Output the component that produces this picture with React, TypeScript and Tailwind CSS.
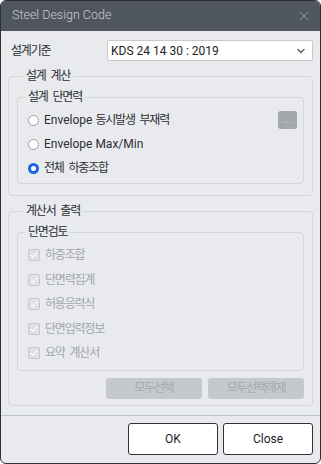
import { ChevronDown, X } from "lucide-react";

const font = { fontFamily: '"Roboto", "Noto Sans CJK KR", sans-serif' };

// Korean glyphs in the reference are set tighter than Noto CJK's full-width advance
function K({ children }: { children: string }) {
  return <span className="tracking-[-1.2px] [word-spacing:3px]">{children}</span>;
}

function Radio({ checked, label, ko }: { checked?: boolean; label?: string; ko?: string }) {
  return (
    <div className="flex h-[24px] items-center">
      <span
        className={`ml-[10px] mr-[5px] h-[11px] w-[11px] shrink-0 rounded-full bg-white ${
          checked ? "border-[3px] border-[#1a66e0]" : "border border-[#9aa0a6]"
        }`}
      />
      <span className="text-[12px] text-[#2b2e33]">
        {label}
        {ko && <K>{ko}</K>}
      </span>
    </div>
  );
}

function Check({ label }: { label: string }) {
  return (
    <div className="flex h-[24.5px] items-center">
      <span className="ml-[10px] mr-[5px] flex h-[12px] w-[12px] shrink-0 items-center justify-center rounded-[2px] border border-[#c4c8cd] bg-[#dfe1e5]">
        <svg width="8" height="8" viewBox="0 0 8 8" fill="none">
          <path d="M1 4.2 L3.1 6.2 L7 1.8" stroke="#f4f5f7" strokeWidth="1.4" strokeLinecap="round" strokeLinejoin="round" />
        </svg>
      </span>
      <span className="text-[12px] text-[#a3a7ad]">
        <K>{label}</K>
      </span>
    </div>
  );
}

function Legend({ children, inner }: { children: string; inner?: boolean }) {
  return (
    <legend className={`${inner ? "ml-[7px]" : "ml-[6px]"} px-[3px] text-[12px] leading-[18px] text-[#2b2e33]`}>
      <K>{children}</K>
    </legend>
  );
}

export default function App() {
  return (
    <div style={font} className="h-[464px] w-[321px] bg-white">
      <div className="flex h-[464px] w-[321px] flex-col overflow-hidden rounded-[6px] border border-[#2c3036] bg-[#e9eaee]">
        {/* Title bar */}
        <div className="flex h-[30px] shrink-0 items-center justify-between bg-[#50565d] pb-[1px] pl-[11px] pr-[8px]">
          <span className="text-[12.5px] font-light text-[#c8ccd1]">Steel Design Code</span>
          <X size={16} strokeWidth={1.2} className="text-[#a9aeb4]" />
        </div>

        <div className="flex flex-col px-[7px]">
          {/* Design code select */}
          <div className="mt-[9px] flex h-[21px] items-center">
            <span className="w-[99px] pl-[3px] text-[12px] text-[#2b2e33]">
              <K>설계기준</K>
            </span>
            <div className="flex h-[21px] flex-1 items-center justify-between rounded-[2px] border border-[#c6cacf] bg-white pl-[3px] pr-[5px]">
              <span className="text-[12px] text-[#222428]">KDS 24 14 30 : 2019</span>
              <ChevronDown size={12} strokeWidth={3} className="text-[#5f646b]" />
            </div>
          </div>

          {/* 설계 계산 */}
          <fieldset className="mt-[6px] rounded-[4px] border border-[#d3d6db] px-[8px] pb-[11px] pt-[3px]">
            <Legend>설계 계산</Legend>
            <fieldset className="rounded-[4px] border border-[#d3d6db] pb-[3px] pt-[2px]">
              <Legend inner>설계 단면력</Legend>
              <div className="flex items-center justify-between pr-[6px]">
                <Radio label="Envelope " ko="동시발생 부재력" />
                <div className="flex h-[18px] w-[19px] items-end justify-center rounded-[3px] bg-[#a4a8ae] pb-[4px] text-[10px] leading-none tracking-[1px] text-[#d6d9dd]">
                  ...
                </div>
              </div>
              <Radio label="Envelope Max/Min" />
              <Radio checked ko="전체 하중조합" />
            </fieldset>
          </fieldset>

          {/* 계산서 출력 */}
          <fieldset className="mt-[6px] rounded-[4px] border border-[#d3d6db] px-[8px] pb-[6px] pt-[3px]">
            <Legend>계산서 출력</Legend>
            <fieldset className="rounded-[4px] border border-[#d3d6db] pb-[4px] pt-[2px]">
              <Legend inner>단면검토</Legend>
              <Check label="하중조합" />
              <Check label="단면력집계" />
              <Check label="허용응력식" />
              <Check label="단면입력정보" />
              <Check label="요약 계산서" />
            </fieldset>
            <div className="mt-[7px] flex justify-end gap-[6px]">
              <div className="flex h-[21px] w-[96px] items-center justify-center rounded-[3px] bg-[#c5c9ce] text-[12px] text-[#a3a8ae]">
                <K>모두선택</K>
              </div>
              <div className="flex h-[21px] w-[96px] items-center justify-center rounded-[3px] bg-[#c5c9ce] text-[12px] text-[#a3a8ae]">
                <K>모두선택해제</K>
              </div>
            </div>
          </fieldset>
        </div>

        {/* Footer */}
        <div className="mt-[9px] border-t border-[#bcc3ca]" />
        <div className="mt-[7px] flex justify-end gap-[5px] pr-[7px]">
          <button className="h-[32px] w-[90px] rounded-[3px] border border-[#2f3338] bg-white text-[12px] text-[#222428]">
            OK
          </button>
          <button className="h-[32px] w-[90px] rounded-[3px] border border-[#2f3338] bg-white text-[12px] text-[#222428]">
            Close
          </button>
        </div>
      </div>
    </div>
  );
}
